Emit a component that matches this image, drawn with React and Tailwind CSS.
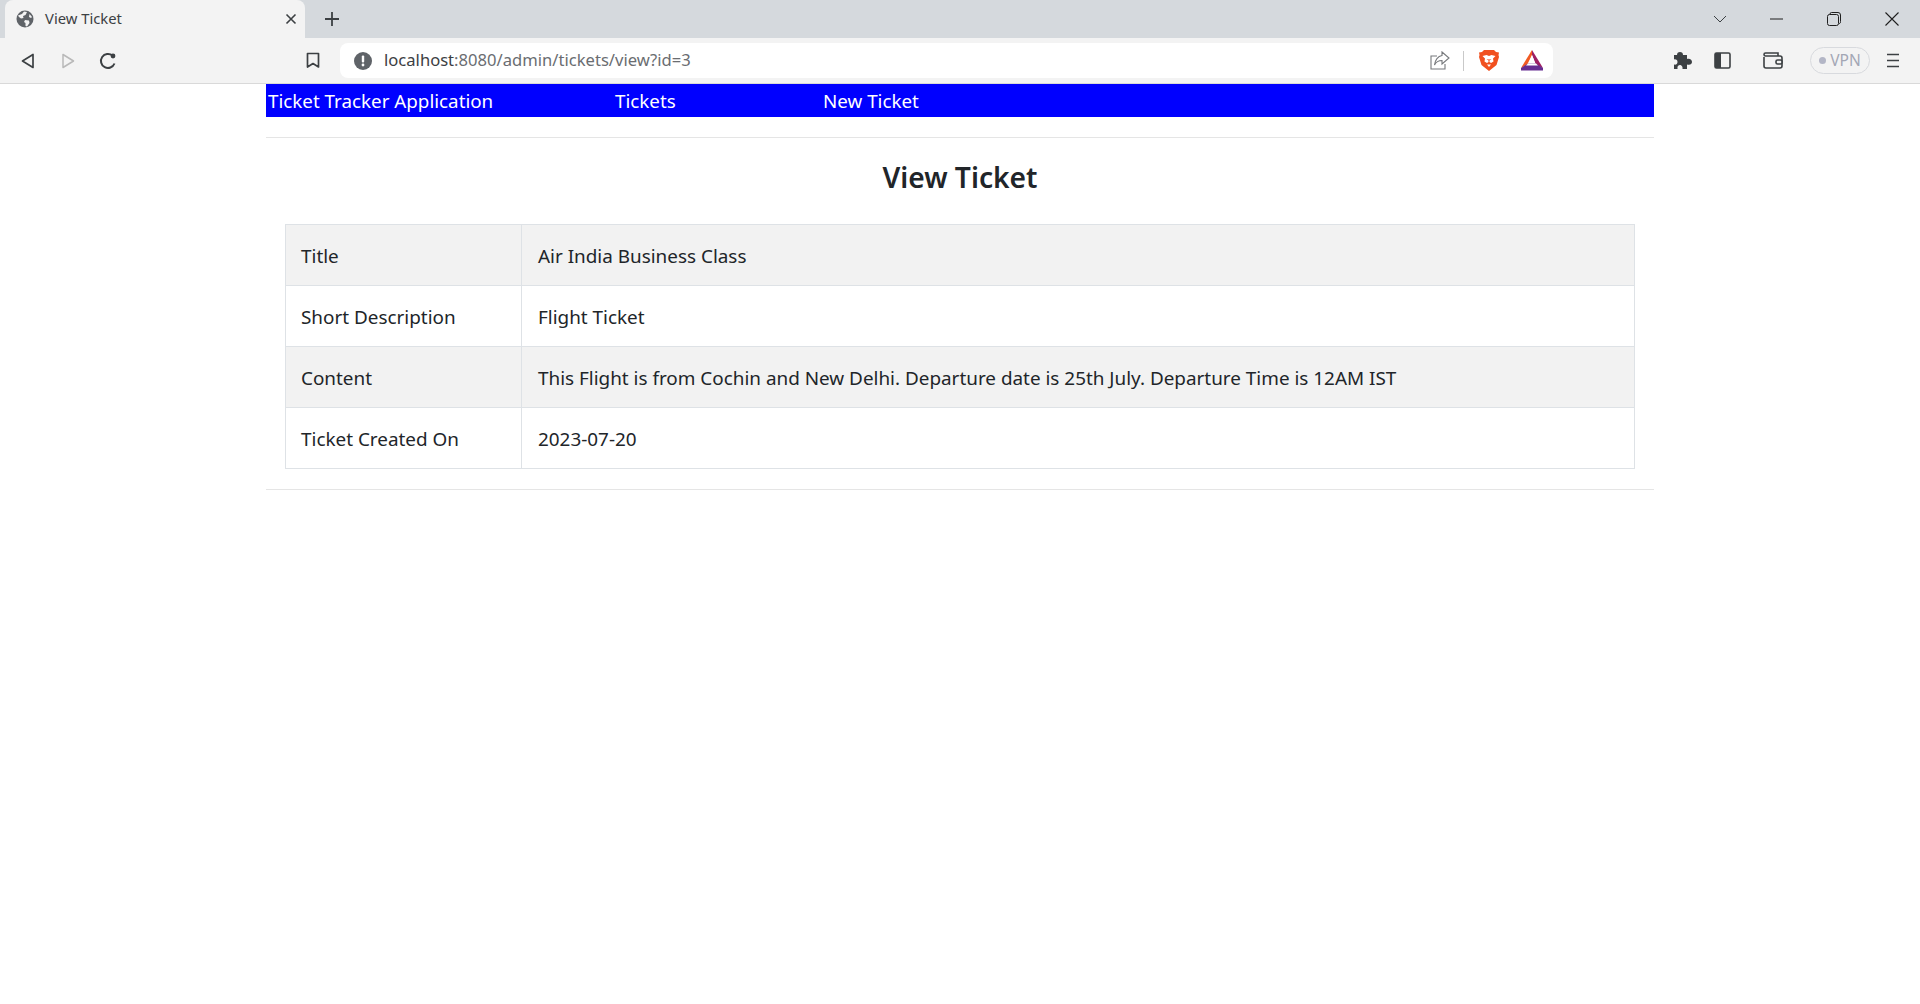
import React from "react";

const font = { fontFamily: '"Noto Sans", "Open Sans", sans-serif' };

function Globe() {
  return (
    <svg width="18" height="18" viewBox="0 0 18 18">
      <circle cx="9" cy="9" r="8.5" fill="#5f6368" />
      <path d="M2 5.5 L6 4 L8 1.5 L11 2 L9.5 5 L7 6 L7.5 8 L5 8.5 L3 7Z M9 10 L13 10.5 L13.5 13 L11 16.5 L9.5 16 L9.5 13 L8 12Z M13.5 4 L16 7 L15 8 L13 7Z" fill="#f3f3f3" />
    </svg>
  );
}

function Row({ label, value, shaded }) {
  return (
    <tr className={shaded ? "bg-[#f2f2f2]" : "bg-white"}>
      <td className="w-[236px] h-[61px] border border-[#dee2e6] pl-[15px] pt-[2px] align-middle">{label}</td>
      <td className="h-[61px] border border-[#dee2e6] pl-[16px] pt-[2px] align-middle">{value}</td>
    </tr>
  );
}

export default function App() {
  return (
    <div className="min-h-[1004px] bg-white text-[#212529]" style={font}>
      {/* Tab strip */}
      <div className="h-[38px] bg-[#d5d9dd] flex items-start pl-[5px]">
        <div className="w-[300px] h-[38px] pb-[1px] bg-[#f3f3f3] rounded-t-[8px] flex items-center pl-[11px] pr-[8px]">
          <Globe />
          <span className="ml-[11px] text-[14.8px] text-[#3c4043] flex-1 leading-none">View Ticket</span>
          <svg width="12" height="12" viewBox="0 0 12 12" stroke="#3c4043" strokeWidth="1.6" fill="none"><path d="M1.5 1.5 L10.5 10.5 M10.5 1.5 L1.5 10.5" /></svg>
        </div>
        <div className="h-[37px] flex items-center ml-[19px]">
          <svg width="16" height="16" viewBox="0 0 16 16" stroke="#3c4043" strokeWidth="1.8" fill="none"><path d="M8 1 V15 M1 8 H15" /></svg>
        </div>
        <div className="flex-1" />
        <div className="h-[37px] flex items-center">
          <svg width="14" height="8" viewBox="0 0 14 8" stroke="#3c4043" strokeWidth="1" fill="none"><path d="M1 1 L7 7 L13 1" /></svg>
          <svg className="ml-[43px]" width="13" height="2" viewBox="0 0 13 2" stroke="#1f1f1f" strokeWidth="1" fill="none"><path d="M0 1 H13" /></svg>
          <svg className="ml-[44px]" width="14" height="14" viewBox="0 0 14 14" stroke="#1f1f1f" strokeWidth="1" fill="none"><rect x="0.5" y="2.5" width="11" height="11" rx="2" /><path d="M3 2.5 V2 A1.5 1.5 0 0 1 4.5 0.5 H11 A2.5 2.5 0 0 1 13.5 3 V9.5 A1.5 1.5 0 0 1 12 11.5" /></svg>
          <svg className="ml-[44px] mr-[21px]" width="14" height="14" viewBox="0 0 14 14" stroke="#1f1f1f" strokeWidth="1.1" fill="none"><path d="M0.5 0.5 L13.5 13.5 M13.5 0.5 L0.5 13.5" /></svg>
        </div>
      </div>

      {/* Toolbar */}
      <div className="h-[46px] bg-[#f3f3f3] border-b border-[#d9d9d9] flex items-center">
        <svg className="ml-[21px]" width="14" height="16" viewBox="0 0 14 16" fill="none" stroke="#3c4043" strokeWidth="1.7" strokeLinejoin="round"><path d="M12 1.5 V14.5 L1.5 8Z" /></svg>
        <svg className="ml-[26px]" width="14" height="16" viewBox="0 0 14 16" fill="none" stroke="#b9b9b9" strokeWidth="1.5" strokeLinejoin="round"><path d="M2 1.5 V14.5 L12.5 8Z" /></svg>
        <svg className="ml-[23px]" width="20" height="20" viewBox="0 0 20 20" fill="none" stroke="#3c4043" strokeWidth="2"><path d="M16.5 12.5 A7 7 0 1 1 14.5 4.6" /><circle cx="15" cy="5" r="2.4" fill="#3c4043" stroke="none" /></svg>
        <svg className="ml-[188px]" width="14" height="17" viewBox="0 0 14 17" fill="none" stroke="#3c4043" strokeWidth="1.7" strokeLinejoin="round"><path d="M1.5 1.5 H12.5 V15 L7 11.5 L1.5 15Z" /></svg>
        <div className="ml-[20px] w-[1213px] h-[35px] bg-white rounded-[8px] flex items-center pl-[14px] pr-[9px]">
          <svg width="18" height="18" viewBox="0 0 18 18"><circle cx="9" cy="9" r="9" fill="#5f6368" /><rect x="7.8" y="3.5" width="2.4" height="7" rx="1" fill="#fff" /><circle cx="9" cy="13" r="1.4" fill="#fff" /></svg>
          <span className="ml-[12px] text-[16.6px] leading-none text-[#6a6d71] flex-1"><span className="text-[#3c4043]">localhost</span>:8080/admin/tickets/view?id=3</span>
          <svg width="20" height="19" viewBox="0 0 20 19" fill="none" stroke="#77797c" strokeWidth="1.1"><path d="M7 5 H1 V18 H15 V13" /><path d="M12 1 L19 7 L12 13 V9.5 C8 9.5 6 11 4.5 14 C5 9 8 5 12 4.5Z" /></svg>
          <div className="ml-[13px] w-px h-[20px] bg-[#c9c9c9]" />
          <svg className="ml-[14px]" width="22" height="23" viewBox="0 0 22 23"><path d="M6 1 H16 L18 3 L21 3.5 L20.5 6 L21 8 L18.5 16 L11 22 L3.5 16 L1 8 L1.5 6 L1 3.5 L4 3Z" fill="#f1501f" /><path d="M4.5 7 L8.5 6 L11 7 L13.5 6 L17.5 7 L15 9.5 L15.5 12.5 L13 14 L11.5 13 V11.5 L13.5 10 L11 10.5 L8.5 10 L10.5 11.5 V13 L9 14 L6.5 12.5 L7 9.5Z M9 15.5 H13 L11 18Z" fill="#fff" /></svg>
          <svg className="ml-[20px]" width="24" height="21" viewBox="0 0 24 21"><path d="M12 0 L23 18 L16 15 L12 5Z" fill="#9e1f63" /><path d="M12 0 L1 18 L7 15 L12 5Z" fill="#f15a22" /><path d="M12 5 L16 15 H8Z" fill="#fff" /><path d="M1 18 L8 13.5 H16 L23 18 V20.5 H1Z" fill="#662d91" /><path d="M8 13.5 H16 L18 15.5 H6Z" fill="#fff" /></svg>
        </div>
        <svg className="ml-[120px]" width="19" height="18" viewBox="0 0 19 18" fill="#3c4043"><path d="M7 0 C9 0 10 1 10 3 H14 V7 C17 6 19 8 19 10 C19 12 17 13.5 14 12.5 V17 H9.5 C10 14 8 13 7 13 C5.5 13 4 14 4.5 17 H1 V12.5 C3 13 4.5 12 4.5 10 C4.5 8 3 7 1 7.5 V3 H4 C4 1 5 0 7 0Z" /></svg>
        <svg className="ml-[22px]" width="17" height="17" viewBox="0 0 17 17" fill="none"><rect x="1" y="1" width="15" height="15" rx="1.5" stroke="#3c4043" strokeWidth="1.6" /><rect x="1" y="1" width="6" height="15" fill="#3c4043" /></svg>
        <svg className="ml-[32px]" width="20" height="17" viewBox="0 0 20 17" fill="none" stroke="#3c4043" strokeWidth="1.6"><path d="M1 5 V14 A2 2 0 0 0 3 16 H17 A2 2 0 0 0 19 14 V6 A2 2 0 0 0 17 4 H2.5 A1.5 1.5 0 0 1 2.5 1 H15 V4" /><rect x="13" y="8" width="6" height="4" rx="1.5" fill="#f3f3f3" /></svg>
        <div className="ml-[27px] w-[60px] h-[27px] rounded-full border-[1.5px] border-[#d8dade] flex items-center justify-center text-[#a3a7b5] text-[15.5px] leading-none">
          <span className="w-[7px] h-[7px] rounded-full bg-[#b3b6c6] mr-[4px]" />VPN
        </div>
        <svg className="ml-[17px]" width="12" height="15" viewBox="0 0 12 15" stroke="#3c4043" strokeWidth="1.7"><path d="M0 1.5 H12 M0 7.5 H12 M0 13.5 H12" /></svg>
      </div>

      {/* Page */}
      <div className="w-[1388px] mx-auto">
        <div className="h-[33px] pt-[2px] bg-[#0000ff] flex items-center text-white text-[18.8px] leading-none pl-[2px]">
          <span className="w-[347px]">Ticket Tracker Application</span>
          <span className="w-[208px]">Tickets</span>
          <span>New Ticket</span>
        </div>
        <hr className="mt-[20px] border-t border-[#e5e5e5]" />
        <h3 className="mt-[21px] text-center text-[28.2px] font-semibold leading-[36px] text-[#212529]">View Ticket</h3>
        <div className="mt-[29px] px-[19px]">
          <table className="w-full border-collapse text-[18.9px] text-[#212529]">
            <tbody>
              <Row shaded label="Title" value="Air India Business Class" />
              <Row label="Short Description" value="Flight Ticket" />
              <Row shaded label="Content" value="This Flight is from Cochin and New Delhi. Departure date is 25th July. Departure Time is 12AM IST" />
              <Row label="Ticket Created On" value="2023-07-20" />
            </tbody>
          </table>
        </div>
        <hr className="mt-[20px] border-t border-[#e5e5e5]" />
      </div>
    </div>
  );
}
